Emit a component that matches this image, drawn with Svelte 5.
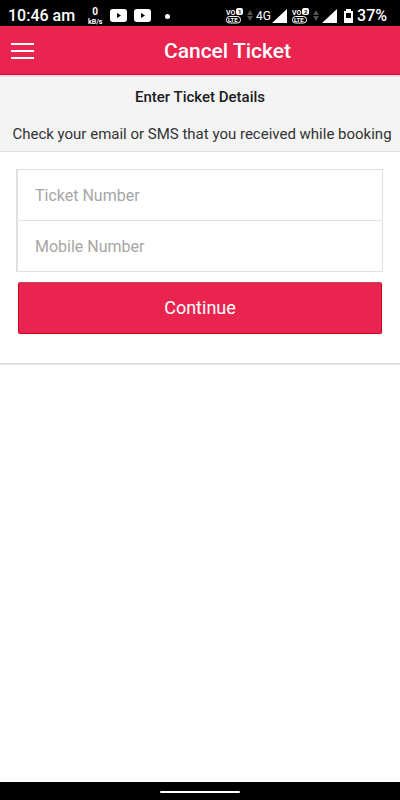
<script>
  let ticket = $state('');
  let mobile = $state('');
</script>

{#snippet volte(n)}
  <svg class="volte" width="18" height="16" viewBox="0 0 18 16" aria-hidden="true">
    <text x="0" y="7" font-size="7" font-weight="700" fill="#fff">VO</text>
    <rect x="10" y="0" width="7" height="7" rx="2" fill="#fff" />
    <text x="12" y="6" font-size="6" font-weight="700" fill="#000">{n}</text>
    <rect x="0.5" y="8.5" width="14" height="6.5" rx="3" fill="none" stroke="#fff" />
    <text x="2" y="14" font-size="6" font-weight="700" fill="#fff">LTE</text>
  </svg>
{/snippet}

{#snippet arrows()}
  <svg class="arrows" width="6" height="12" viewBox="0 0 6 12" aria-hidden="true">
    <path d="M3 0 6 5H0ZM0 6h6L3 11Z" fill="#505050" />
  </svg>
{/snippet}

{#snippet signal()}
  <svg width="15" height="14" viewBox="0 0 15 14" aria-hidden="true">
    <path d="M15 0V14H0Z" fill="#fff" />
  </svg>
{/snippet}

{#snippet video()}
  <svg class="video" width="17" height="14" viewBox="0 0 17 14" aria-hidden="true">
    <rect width="17" height="13" rx="3" fill="#fff" />
    <path d="M7 4v5l4-2.500Z" fill="#000" />
  </svg>
{/snippet}

<div class="screen">
  <div class="status">
    <div class="left">
      <span class="time">10:46 am</span>
      <span class="speed"><b>0</b><small>kB/s</small></span>
      {@render video()}
      {@render video()}
      <i class="dot"></i>
    </div>
    <div class="right">
      {@render volte(1)}
      {@render arrows()}
      <span class="net">4G</span>
      {@render signal()}
      <span class="sim">{@render volte(2)}</span>
      {@render arrows()}
      {@render signal()}
      <svg class="battery" width="9" height="14" viewBox="0 0 9 14" aria-hidden="true">
        <path fill-rule="evenodd" d="M2 0h5v2H9v12H0V2h2ZM2 4v5h5V4Z" fill="#fff" />
      </svg>
      <span class="percent">37%</span>
    </div>
  </div>

  <header>
    <button class="menu" aria-label="Menu">
      <svg width="23" height="16" viewBox="0 0 23 16" aria-hidden="true">
        <path d="M0 0h23v2H0ZM0 7h23v2H0ZM0 14h23v2H0Z" fill="#fff" />
      </svg>
    </button>
    <h1>Cancel Ticket</h1>
  </header>

  <main>
    <section class="intro">
      <h2>Enter Ticket Details</h2>
      <p>Check your email or SMS that you received while booking</p>
    </section>
    <form onsubmit={(e) => e.preventDefault()}>
      <div class="fields">
        <input type="text" aria-label="Ticket Number" placeholder="Ticket Number" bind:value={ticket} />
        <input type="tel" aria-label="Mobile Number" placeholder="Mobile Number" bind:value={mobile} />
      </div>
      <button class="submit" type="submit">Continue</button>
    </form>
  </main>

  <footer><span></span></footer>
</div>

<style>
  .screen {
    display: flex;
    flex-direction: column;
    min-height: 100vh;
    background: #fff;
    color: #1c1c1c;
    font-family: Roboto, sans-serif;
    overflow-x: hidden;
  }
  .status {
    display: flex;
    justify-content: space-between;
    height: 26px;
    padding: 6px 13px 0 8px;
    box-sizing: border-box;
    background: #000;
    color: #fff;
  }
  .left, .right {
    display: flex;
    align-items: center;
    height: 20px;
  }
  svg {
    display: block;
    flex: none;
  }
  .time, .percent {
    font-size: 16px;
    line-height: 20px;
    font-weight: 500;
    white-space: nowrap;
  }
  .speed {
    display: flex;
    flex-direction: column;
    align-items: center;
    width: 16px;
    margin: 0 7px 0 12px;
  }
  .speed b {
    font-size: 10px;
    line-height: 12px;
  }
  .speed small {
    font-size: 7px;
    line-height: 8px;
    font-weight: 700;
  }
  .video {
    margin-right: 7px;
  }
  .dot {
    width: 5px;
    height: 5px;
    margin-left: 7px;
    border-radius: 50%;
    background: #fff;
  }
  .arrows {
    margin: 0 3px;
  }
  .net {
    font-size: 12px;
    line-height: 20px;
    margin-right: 1px;
  }
  .sim {
    margin-left: 5px;
  }
  .battery {
    margin: 0 4px 0 7px;
  }
  header {
    display: grid;
    grid-template-columns: 55px 1fr;
    align-items: center;
    height: 49px;
    padding-top: 2px;
    box-sizing: border-box;
    background: #e9254f;
    border-bottom: 1px solid #e0033f;
    color: #fff;
  }
  .menu {
    height: 46px;
    padding: 0 0 0 11px;
    border: 0;
    background: none;
  }
  h1 {
    margin: 0;
    font-size: 21px;
    line-height: 24px;
    font-weight: 500;
    text-align: center;
  }
  main {
    border-bottom: 1px solid #d8d8d8;
    box-shadow: 0 1px 0 #eee;
  }
  .intro {
    padding: 10px 0 7px;
    background: #f4f4f4;
    border-top: 2px solid #e2e2e2;
    border-bottom: 1px solid #e0e0e0;
    text-align: center;
  }
  h2, p {
    margin: 0;
    line-height: 20px;
    white-space: nowrap;
  }
  h2 {
    font-size: 15px;
    font-weight: 500;
  }
  p {
    margin-top: 17px;
    padding-left: 4px;
    font-size: 15px;
    color: #333;
  }
  form {
    padding: 17px 17px 29px 16px;
  }
  .fields {
    border: 1px solid #e0e0e0;
    border-left-width: 2px;
  }
  input {
    display: block;
    width: 100%;
    height: 50px;
    padding: 0 17px;
    box-sizing: border-box;
    border: 0;
    background: none;
    font: 16px Roboto, sans-serif;
    color: #333;
  }
  input + input {
    height: 51px;
    border-top: 1px solid #e0e0e0;
  }
  input::placeholder {
    color: #a6a6a6;
    opacity: 1;
  }
  .submit {
    display: block;
    width: calc(100% - 3px);
    height: 52px;
    margin: 10px 0 0 2px;
    padding: 0 0 2px;
    border: 1px solid #c80019;
    border-top-color: #c4475f;
    border-radius: 2px;
    background: #e9254f;
    color: #fff;
    font: 18px Roboto, sans-serif;
  }
  footer {
    display: flex;
    justify-content: center;
    height: 18px;
    margin-top: auto;
    padding-top: 9px;
    box-sizing: border-box;
    background: #000;
  }
  footer span {
    width: 80px;
    height: 2px;
    border-radius: 1px;
    background: #fff;
  }
</style>
